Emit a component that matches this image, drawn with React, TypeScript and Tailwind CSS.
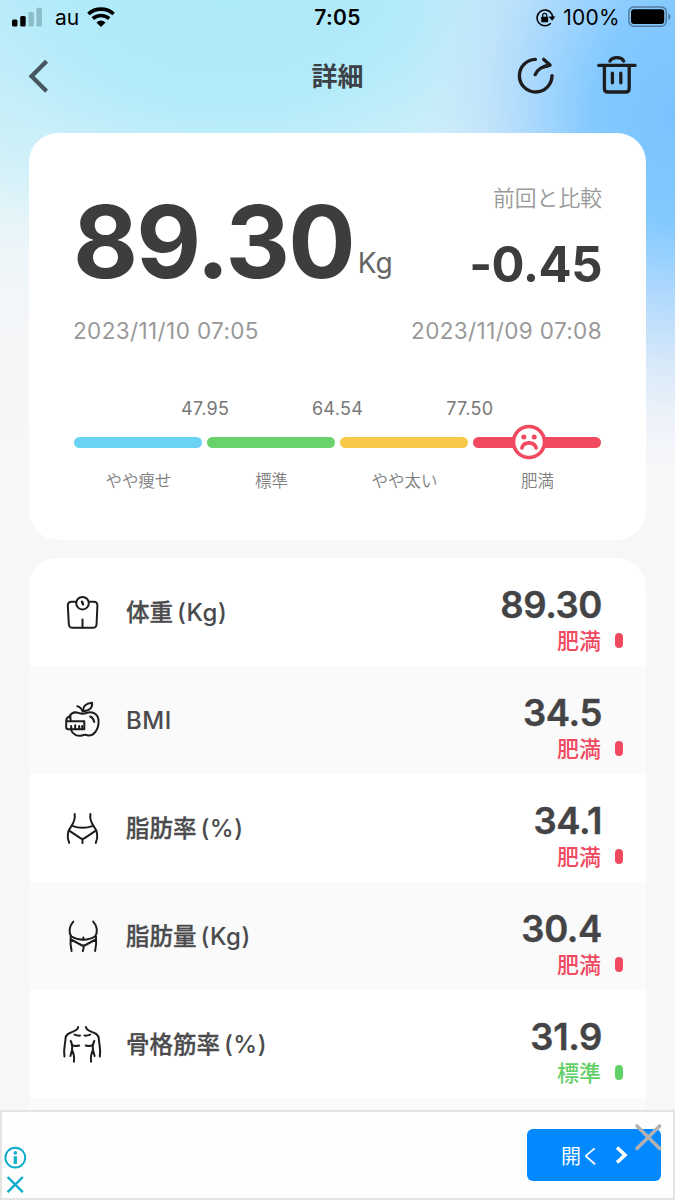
import type { ReactNode } from "react";

const base = "font-['Inter','Noto_Sans_CJK_JP',sans-serif]";

function SignalIcon() {
  return (
    <svg width="32" height="20" viewBox="0 0 32 20">
      <rect x="0" y="12.5" width="5.5" height="7" rx="1.5" fill="#000" />
      <rect x="8.2" y="9" width="5.5" height="10.5" rx="1.5" fill="#000" />
      <rect x="16.4" y="5" width="5.5" height="14.5" rx="1.5" fill="#8cbcc8" />
      <rect x="24.4" y="0.8" width="5.5" height="18.7" rx="1.5" fill="#8cbcc8" />
    </svg>
  );
}

function WifiIcon() {
  return (
    <svg width="28" height="20" viewBox="0 0 28 20" fill="none" stroke="#000" strokeWidth="3.7">
      <path d="M1.4 7C8.4 .4 19.6 .4 26.6 7" />
      <path d="M5.8 11.7C10.5 7.4 17.5 7.4 22.2 11.7" />
      <path d="M9.4 15.5Q14 11.4 18.6 15.5L14 19.9Z" fill="#000" stroke="none" />
    </svg>
  );
}

function LockIcon() {
  return (
    <svg width="20" height="18" viewBox="0 0 20 18" fill="none" stroke="#000">
      <path d="M15.6 4.6A7.9 7.9 0 1 0 14.8 14.2" strokeWidth="1.6" />
      <path d="M12.6 7.4H19.4L16.2 11.8Z" fill="#000" stroke="none" />
      <path d="M15.6 4.6L16.8 8" strokeWidth="1.6" />
      <rect x="5.2" y="7.7" width="7" height="5.6" rx=".7" fill="#000" stroke="none" />
      <path d="M6.7 8.2V6.3A2 2 0 0 1 10.7 6.3V8.2" strokeWidth="1.2" />
    </svg>
  );
}

function BatteryIcon() {
  return (
    <svg width="44" height="22" viewBox="0 0 44 22">
      <rect x=".9" y=".9" width="37.4" height="19.4" rx="5" fill="none" stroke="#537a9a" strokeWidth="1.5" />
      <rect x="3" y="3.2" width="33.2" height="14.8" rx="3" fill="#000" />
      <path d="M40.3 7.4Q42.6 8.2 42.6 10.7T40.3 14Z" fill="#537a9a" />
    </svg>
  );
}

function ShareIcon() {
  return (
    <svg width="40" height="40" viewBox="0 0 40 40" fill="none" stroke="#1d1d1f" strokeWidth="3.4" strokeLinecap="round" strokeLinejoin="round">
      <path d="M19.4 3.4A16.3 16.3 0 1 0 36 19.6" />
      <path d="M19.2 18.6Q22.2 11.2 33 9.4" />
      <path d="M27.8 3.4L34 9L28.6 10.6" />
    </svg>
  );
}

function TrashIcon() {
  return (
    <svg width="40" height="40" viewBox="0 0 40 40" fill="none" stroke="#1d1d1f" strokeWidth="3.3" strokeLinecap="round" strokeLinejoin="round">
      <path d="M1.8 9.4H38" />
      <path d="M13 5Q14.8 1.6 19.9 1.6T26.6 5" />
      <path d="M7.4 10.3V32.4Q7.4 36 11 36H28.6Q32.2 36 32.2 32.4V10.3" />
      <path d="M15.4 17.2V26.8M23.8 17.2V26.8" />
    </svg>
  );
}

function SadFace() {
  return (
    <svg width="36" height="36" viewBox="0 0 36 36">
      <circle cx="18" cy="18" r="15.5" fill="#fff" stroke="#f1495f" strokeWidth="3.6" />
      <circle cx="12.8" cy="12.9" r="2.5" fill="#f1495f" />
      <circle cx="23.2" cy="12.9" r="2.5" fill="#f1495f" />
      <path d="M10.9 24Q12.3 18.9 18 18.9T25.1 24" fill="none" stroke="#f1495f" strokeWidth="3.6" strokeLinecap="round" />
    </svg>
  );
}

function RowIcon({ children }: { children: ReactNode }) {
  return (
    <svg width="40" height="40" viewBox="0 0 40 40" fill="none" stroke="#1c1c1e" strokeWidth="2" strokeLinecap="round" strokeLinejoin="round">
      {children}
    </svg>
  );
}

const icons = {
  scale: (
    <RowIcon>
      <path d="M14 8.8H9.6Q5.7 8.8 5.8 12.5L6.8 31Q7 34.8 10.6 34.8H31Q34.4 34.8 34.6 31L35.4 12.5Q35.5 8.8 31.8 8.8H27" />
      <circle cx="20.5" cy="10.2" r="6.3" />
      <path d="M20 8.7L21 11.4" strokeWidth="2.4" />
      <path d="M20.5 26.5V34.5" />
    </RowIcon>
  ),
  apple: (
    <RowIcon>
      <path d="M7 16.3C9.4 11.3 13.5 10.9 16.4 11.9Q20.7 13.5 24.4 12C32 9.5 36.8 14.3 36.6 21C36.4 29.4 31.3 34.9 26.2 34.5Q23.2 33.3 20.6 34.2C15.5 36 10.4 33.4 8.7 28.3" />
      <path d="M4.4 20.2H22.3V28.3H6.2Q4.2 28.3 4.2 26V20.2ZM4.2 19.7Q4.5 16 8.3 15.3L8.7 19.5" />
      <path d="M9.2 27.8V25M13.2 27.8V24.3M17.2 27.8V25M20.2 27.8V25" />
      <path d="M20.7 10.6Q19 6 15.3 5.3" />
      <path d="M21 10.2Q20.7 2.6 30 1.7Q31 9.7 21 10.2Z" />
      <path d="M28.2 15.5Q31.5 17 32.2 20.9" />
    </RowIcon>
  ),
  slim: (
    <RowIcon>
      <path d="M12.6 5C14.4 14.7 7 17.4 6 23.9C5.2 27.7 6 31 7.2 33.9M28.4 5C26.6 14.7 34 17.4 35 23.9C35.8 27.7 35 31 33.8 33.9" />
      <path d="M10.1 16.9Q20.5 20.7 31 16.9M7.1 21.7L18.8 29.4Q20.5 30.3 22.2 29.4L33.9 21.7M20.5 30.1V33.9" />
    </RowIcon>
  ),
  belly: (
    <RowIcon>
      <path d="M11.3 4.6C7 9.3 6.5 15.8 9.4 19.5Q14.7 22.7 21.3 22.7T33 19.5C35.9 15.8 35.5 9.3 31.2 4.6" />
      <path d="M8.7 19.5Q8 27.7 9.6 34M34 19.5Q34.7 27.7 33.1 34M9 22.5L19.2 28Q21.4 29.1 23.5 28L33.8 22.5M21.3 20.5V22.4M20.8 34Q22.2 31.2 21.4 28.7" />
    </RowIcon>
  ),
  torso: (
    <RowIcon>
      <path d="M16.1 2C15.8 8.1 3.8 5.7 3.5 13.7C3.3 19.2 1.2 23.3 2.5 31.5M24 2C24.3 8.1 36.5 5.7 36.8 13.7C37 19.2 39.1 23.3 37.8 31.5" />
      <path d="M12.5 9.6Q15.4 10.8 18 10.6M22.5 10.6Q25.4 10.8 28.2 9.6M9.8 20Q13 21.7 17.2 20.5M23.7 20.5Q27.7 21.7 31 20" />
      <path d="M8.7 15.9Q11 20.4 9.9 25.5L8.4 31M32.3 15.9Q30 20.4 31.1 25.5L32.6 31M10 25Q12.8 30.2 11.9 36.7M31 25Q28.2 30.2 29.1 36.7" />
    </RowIcon>
  ),
};

const rows = [
  { icon: icons.scale, label: "体重", unit: "(Kg)", value: "89.30", status: "肥満", normal: false },
  { icon: icons.apple, label: "", unit: "BMI", value: "34.5", status: "肥満", normal: false },
  { icon: icons.slim, label: "脂肪率", unit: "(%)", value: "34.1", status: "肥満", normal: false },
  { icon: icons.belly, label: "脂肪量", unit: "(Kg)", value: "30.4", status: "肥満", normal: false },
  { icon: icons.torso, label: "骨格筋率", unit: "(%)", value: "31.9", status: "標準", normal: true },
];

const segments = [
  { name: "やや痩せ", color: "bg-[#6ad2f3]" },
  { name: "標準", color: "bg-[#68d36b]" },
  { name: "やや太い", color: "bg-[#f8c848]" },
  { name: "肥満", color: "bg-[#f1495f]", marker: true },
];

function StatusBar() {
  return (
    <div className="grid h-9 grid-cols-3 items-center text-black">
      <div className="flex h-9 items-center pb-[2px] pl-3">
        <SignalIcon />
        <span className="ml-[11px] pt-[2px] text-[21px] leading-[34px]">au</span>
        <span className="ml-[8px]"><WifiIcon /></span>
      </div>
      <div className="text-center text-[21px] leading-9 font-semibold tracking-[0.3px]">7:05</div>
      <div className="flex h-9 items-center justify-end pb-[2px] pr-[9px]">
        <span className="pt-[1px]"><LockIcon /></span>
        <span className="ml-[7px] pt-[2px] text-[21px] leading-[34px] tracking-[0.3px]">100%</span>
        <span className="-mr-[6px] ml-[8px]"><BatteryIcon /></span>
      </div>
    </div>
  );
}

function Header() {
  return (
    <header className="grid h-[97px] grid-cols-3 items-start pt-[20px]">
      <svg className="ml-[26px] mt-[1px]" width="26" height="38" viewBox="0 0 26 38" fill="none" stroke="#45585f" strokeWidth="4.3">
        <path d="M20.6 4.2L5.6 19.2L20.6 34.2" />
      </svg>
      <h1 className="pt-[1px] text-center text-[26px] leading-[39px] font-bold text-[#3b4146]">詳細</h1>
      <div className="flex justify-end gap-[41px] pr-[38px]">
        <ShareIcon />
        <TrashIcon />
      </div>
    </header>
  );
}

function Summary() {
  return (
    <section className="mx-[29px] h-[407px] rounded-[29px] bg-white px-11 pt-[48px]">
      <div className="flex h-[127px] justify-between">
        <div className="flex items-start text-[#3d3d3f]">
          <span className="text-[100px] leading-[121px] font-bold tracking-[-1.9px]">89.30</span>
          <span className="ml-[4px] mt-[65px] text-[28px] leading-[34px] text-[#666]">Kg</span>
        </div>
        <div className="text-right">
          <div className="pt-[1px] text-[21.8px] leading-[32px] font-[350] text-[#999]">前回と比較</div>
          <div className="mt-[21px] text-[49px] leading-[60px] font-bold tracking-[-0.5px] text-[#3d3d3f]">-0.45</div>
        </div>
      </div>
      <div className="mt-[7px] flex h-8 items-center justify-between text-[22.5px] tracking-[0.38px] text-[#999]">
        <span>2023/11/10 07:05</span>
        <span>2023/11/09 07:08</span>
      </div>
      <div className="mx-[66px] mt-[49px] grid h-[26px] grid-cols-3 text-center text-[18px] leading-[26px] tracking-[0.3px] text-[#777]">
        <span>47.95</span>
        <span>64.54</span>
        <span>77.50</span>
      </div>
      <div className="mt-[2px] grid grid-cols-4 gap-[5px] px-px">
        {segments.map((s) => (
          <div key={s.name}>
            <div className="flex h-9 items-center">
              <div className={`relative flex h-[11px] w-full items-center rounded-full ${s.color}`}>
                {s.marker && <div className="absolute left-[38px]"><SadFace /></div>}
              </div>
            </div>
            <div className="mt-[9px] pl-px text-center text-[16.5px] leading-6 font-[350] text-[#808080]">{s.name}</div>
          </div>
        ))}
      </div>
    </section>
  );
}

function Metrics() {
  return (
    <section className="mx-[29px] mt-[18px] h-[552px] overflow-hidden rounded-t-[29px] bg-[#fafafa]">
      {rows.map((r, i) => (
        <div key={r.label + r.unit} className={`flex h-[108px] pl-[33px] ${i % 2 ? "bg-[#fafafa]" : "bg-white"}`}>
          <div className="flex items-center pt-[1px]">{r.icon}</div>
          <div className="ml-[24px] flex flex-1 items-center gap-[4px] pt-[2px] text-[#4b4b4d]">
            {r.label && <span className="text-[23.5px] leading-9 font-medium [-webkit-text-stroke:0.3px_#4b4b4d]">{r.label}</span>}
            <span className="text-[24px] leading-9 font-medium tracking-[0.5px]">{r.unit}</span>
          </div>
          <div className="flex flex-col items-end pt-[25px]">
            <div className="pr-[44px] text-[36.5px] leading-[44px] font-semibold tracking-[-0.4px] text-[#444446] [-webkit-text-stroke:0.4px_#444446]">{r.value}</div>
            <div className={`flex h-[27px] items-center pr-[23px] text-[22px] font-medium ${r.normal ? "text-[#62cf68]" : "text-[#f1495f]"}`}>
              <span className="pt-[2px] leading-[27px]">{r.status}</span>
              <span className={`ml-[14px] h-[15px] w-[8px] rounded-full ${r.normal ? "bg-[#62d167]" : "bg-[#f1495f]"}`} />
            </div>
          </div>
        </div>
      ))}
    </section>
  );
}

function AdBanner() {
  return (
    <footer className="relative flex h-[90px] items-center justify-between border-2 border-[#e4e4e5] bg-[#fefefe]">
      <svg className="ml-px mt-[2px] self-end" width="28" height="54" viewBox="0 0 28 54" fill="none" stroke="#0caccc">
        <circle cx="12.3" cy="13.6" r="9.9" strokeWidth="1.9" />
        <path d="M12.3 12.2V20" strokeWidth="3.2" />
        <circle cx="12.3" cy="8.9" r="1.8" fill="#0caccc" stroke="none" />
        <path d="M4.6 33L19.8 48.2M19.8 33L4.6 48.2" strokeWidth="2.4" />
      </svg>
      <button className="mr-[12px] flex h-[52px] w-[134px] items-center rounded-[6px] bg-[#0288ff] pl-[34px] text-[20px] text-white">
        <span className="pt-[3px]">開く</span>
        <svg className="ml-[13px]" width="16" height="20" viewBox="0 0 16 20" fill="none" stroke="#fff" strokeWidth="3.6">
          <path d="M3 2.5L11 10L3 17.5" />
        </svg>
      </button>
      <svg className="absolute right-[10px] top-[10px]" width="30" height="30" viewBox="0 0 30 30" fill="none" stroke="#b1b1b3" strokeWidth="3.6" strokeLinecap="round">
        <path d="M4 4L26.6 26.6M26.6 4L4 26.6" />
      </svg>
    </footer>
  );
}

export default function App() {
  return (
    <div
      lang="ja"
      className={`h-[1200px] w-[675px] overflow-hidden bg-[#f7f7fa] bg-[radial-gradient(ellipse_270px_350px_at_100%_115px,#7ac3ff_0%,#82c9ff_30%,#9dd1fed0_50%,#bcdcfb90_70%,#cfe5f940_86%,#d5e9f800_100%),radial-gradient(ellipse_380px_260px_at_230px_0px,#aee9fa_0%,#b0eafae0_40%,#c0eefa80_70%,#d0f0f900_100%),linear-gradient(180deg,#bbe9fa_0px,#cdeff8_110px,#def3f9_190px,#eff6f9_260px,#f6f6f8_350px,#f7f7fa_440px)] ${base}`}
    >
      <StatusBar />
      <Header />
      <Summary />
      <Metrics />
      <AdBanner />
    </div>
  );
}
